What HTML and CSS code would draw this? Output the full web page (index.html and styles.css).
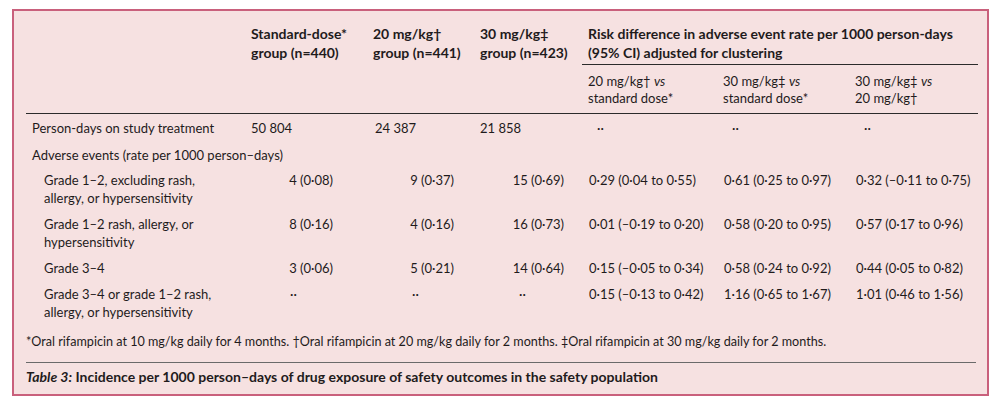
FILE: index.html
```html
<!DOCTYPE html>
<html lang="en">
<head>
<meta charset="utf-8">
<title>Table 3</title>
<link rel="stylesheet" href="styles.css">
</head>
<body>
<div class="box">
  <table class="tbl">
    <colgroup>
      <col class="c0"><col class="c1"><col class="c2"><col class="c3"><col class="c4"><col class="c5"><col class="c6">
    </colgroup>
    <thead>
      <tr class="h1">
        <th rowspan="2" class="hb"></th>
        <th rowspan="2" class="hb">Standard-dose*<br>group (n=440)</th>
        <th rowspan="2" class="hb">20 mg/kg†<br>group (n=441)</th>
        <th rowspan="2" class="hb">30 mg/kg‡<br>group (n=423)</th>
        <th colspan="3" class="risk">Risk difference in adverse event rate per 1000 person-days<br>(95% CI) adjusted for clustering</th>
      </tr>
      <tr class="h2">
        <th class="sub hb">20 mg/kg† <i>vs</i><br>standard dose*</th>
        <th class="sub hb">30 mg/kg‡ <i>vs</i><br>standard dose*</th>
        <th class="sub hb">30 mg/kg‡ <i>vs</i><br>20 mg/kg†</th>
      </tr>
    </thead>
    <tbody>
      <tr class="first">
        <td class="lab">Person-days on study treatment</td>
        <td class="pd1">50 804</td>
        <td class="pd2">24 387</td>
        <td class="pd3">21 858</td>
        <td class="pdd">··</td>
        <td class="pdd">··</td>
        <td class="pdd">··</td>
      </tr>
      <tr class="adv">
        <td class="lab" colspan="7">Adverse events (rate per 1000 person–days)</td>
      </tr>
      <tr>
        <td class="ind">Grade 1–2, excluding rash,<br>allergy, or hypersensitivity</td>
        <td class="n1">4 (0·08)</td>
        <td class="n2">9 (0·37)</td>
        <td class="n3">15 (0·69)</td>
        <td class="r">0·29 (0·04 to 0·55)</td>
        <td class="r">0·61 (0·25 to 0·97)</td>
        <td class="r">0·32 (–0·11 to 0·75)</td>
      </tr>
      <tr>
        <td class="ind">Grade 1–2 rash, allergy, or<br>hypersensitivity</td>
        <td class="n1">8 (0·16)</td>
        <td class="n2">4 (0·16)</td>
        <td class="n3">16 (0·73)</td>
        <td class="r">0·01 (–0·19 to 0·20)</td>
        <td class="r">0·58 (0·20 to 0·95)</td>
        <td class="r">0·57 (0·17 to 0·96)</td>
      </tr>
      <tr>
        <td class="ind">Grade 3–4</td>
        <td class="n1">3 (0·06)</td>
        <td class="n2">5 (0·21)</td>
        <td class="n3">14 (0·64)</td>
        <td class="r">0·15 (–0·05 to 0·34)</td>
        <td class="r">0·58 (0·24 to 0·92)</td>
        <td class="r">0·44 (0·05 to 0·82)</td>
      </tr>
      <tr>
        <td class="ind">Grade 3–4 or grade 1–2 rash,<br>allergy, or hypersensitivity</td>
        <td class="dd">··</td>
        <td class="dd">··</td>
        <td class="dd">··</td>
        <td class="r">0·15 (–0·13 to 0·42)</td>
        <td class="r">1·16 (0·65 to 1·67)</td>
        <td class="r">1·01 (0·46 to 1·56)</td>
      </tr>
    </tbody>
  </table>
  <p class="foot">*Oral rifampicin at 10 mg/kg daily for 4 months. †Oral rifampicin at 20 mg/kg daily for 2 months. ‡Oral rifampicin at 30 mg/kg daily for 2 months.</p>
  <p class="cap"><i>Table 3:</i> Incidence per 1000 person–days of drug exposure of safety outcomes in the safety population</p>
</div>
</body>
</html>
```

FILE: styles.css
```css
html, body {
  margin: 0;
  padding: 0;
  background: #ffffff;
}

body {
  font-family: Lato, "Liberation Sans", sans-serif;
  font-size: 13px;
  color: #1f1b1c;
}

.box {
  box-sizing: border-box;
  width: 977px;
  height: 387px;
  margin: 9px 0 0 12px;
  border: 2px solid #c9607c;
  background: #f6e1e1;
  padding: 9px 9px 0 12px;
}

.tbl {
  width: 952px;
  border-collapse: collapse;
  table-layout: fixed;
}

.c0 { width: 219px; }
.c1 { width: 122px; }
.c2 { width: 107px; }
.c3 { width: 108px; }
.c4 { width: 135px; }
.c5 { width: 132px; }
.c6 { width: 129px; }

th {
  font-size: 14px;
  font-weight: 700;
  text-align: left;
  vertical-align: top;
  padding: 4px 6px 2px 6px;
  line-height: 19px;
  white-space: nowrap;
}

.hb {
  border-bottom: 1px solid #2b2b2b;
}

.risk {
  border-bottom: 1px solid #2b2b2b;
}

.sub {
  font-size: 13px;
  font-weight: 400;
  line-height: 17px;
  padding: 8px 6px 6px 6px;
}

.sub i { font-style: italic; }

td {
  padding: 4px 6px;
  line-height: 18px;
  vertical-align: top;
  white-space: nowrap;
}

.first td { padding-top: 5px; padding-bottom: 5px; }
.adv td { padding-bottom: 3px; }

.lab { padding-left: 6px; }
.ind { padding-left: 18px; }

.pd1 { padding-left: 6px; }
.pd2 { padding-left: 8px; }
.pd3 { padding-left: 6px; }
.pdd { padding-left: 15px; }

.n1 { text-align: right; padding-right: 34px; }
.n2 { text-align: right; padding-right: 20px; }
.n3 { text-align: right; padding-right: 18px; }

.dd { padding-left: 45px; }

.r { padding-left: 7px; padding-right: 0; }

.foot {
  margin: 8px 0 0 0;
  width: 950px;
  font-size: 12.6px;
  line-height: 18px;
  padding-bottom: 11px;
  border-bottom: 1px solid #6a6a6a;
}

.cap {
  margin: 0;
  padding-top: 5px;
  font-size: 14px;
  line-height: 18px;
  font-weight: 700;
}

.cap i { font-style: italic; }
```
